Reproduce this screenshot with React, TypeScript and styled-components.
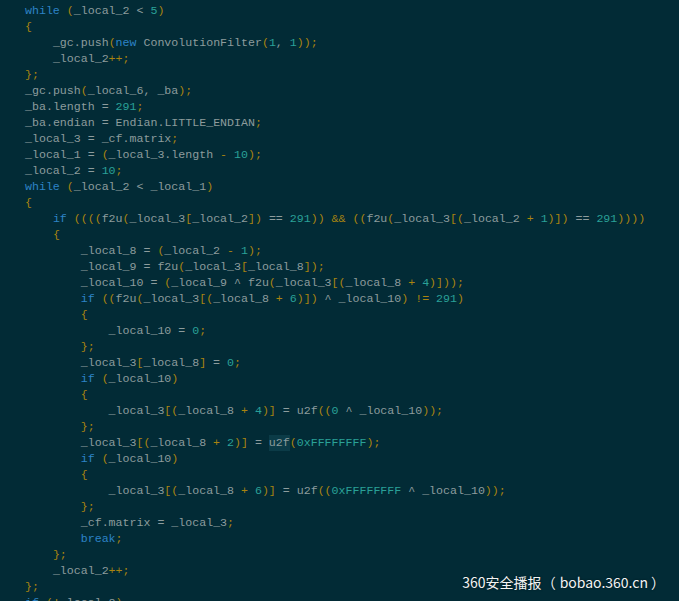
import React from "react";
import styled, { createGlobalStyle } from "styled-components";

const Global = createGlobalStyle`
  html, body { margin: 0; padding: 0; background: #022b36; overflow: hidden; }
  #root { width: 679px; height: 601px; }
`;

const Screen = styled.div`
  position: relative;
  width: 679px;
  height: 601px;
  overflow: hidden;
  background: #022b36;
`;

const Code = styled.pre`
  margin: -13px 0 0 0;
  padding: 0 0 0 25px;
  font-family: "Liberation Mono", "Courier New", monospace;
  font-size: 11.62px;
  line-height: 16px;
  color: #8d9c9d;
  white-space: pre;
`;

const Line = styled.div`
  height: 16px;
`;

type Kind = "kw" | "num" | "punc" | "op" | "txt" | "hl";

const colors: Record<Kind, string> = {
  kw: "#2d83c6",
  num: "#2aa198",
  punc: "#a98410",
  op: "#8d9c9d",
  txt: "#8d9c9d",
  hl: "#8d9c9d",
};

const Tok = styled.span<{ $k: Kind }>`
  color: ${(p) => colors[p.$k]};
  ${(p) => (p.$k === "hl" ? "background: #0b3b47; padding: 1px 0 2px 0;" : "")}
`;

const Watermark = styled.div`
  position: absolute;
  right: 14px;
  bottom: 9px;
  font-family: "Noto Sans CJK SC", "Noto Sans", sans-serif;
  font-size: 14px;
  color: #f2f4f4;
  text-shadow: 0 0 2px rgba(0, 0, 0, 0.6);
`;

const Paren = styled.span<{ $side: "open" | "close" }>`
  ${(p) => (p.$side === "open" ? "padding-right: 4px;" : "padding-left: 3px;")}
`;

const lines: string[] = [
  "_local_2 = 0;",
  "while (_local_2 < 5)",
  "{",
  "    _gc.push(new ConvolutionFilter(1, 1));",
  "    _local_2++;",
  "};",
  "_gc.push(_local_6, _ba);",
  "_ba.length = 291;",
  "_ba.endian = Endian.LITTLE_ENDIAN;",
  "_local_3 = _cf.matrix;",
  "_local_1 = (_local_3.length - 10);",
  "_local_2 = 10;",
  "while (_local_2 < _local_1)",
  "{",
  "    if ((((f2u(_local_3[_local_2]) == 291)) && ((f2u(_local_3[(_local_2 + 1)]) == 291))))",
  "    {",
  "        _local_8 = (_local_2 - 1);",
  "        _local_9 = f2u(_local_3[_local_8]);",
  "        _local_10 = (_local_9 ^ f2u(_local_3[(_local_8 + 4)]));",
  "        if ((f2u(_local_3[(_local_8 + 6)]) ^ _local_10) != 291)",
  "        {",
  "            _local_10 = 0;",
  "        };",
  "        _local_3[_local_8] = 0;",
  "        if (_local_10)",
  "        {",
  "            _local_3[(_local_8 + 4)] = u2f((0 ^ _local_10));",
  "        };",
  "        _local_3[(_local_8 + 2)] = @u2f(0xFFFFFFFF);",
  "        if (_local_10)",
  "        {",
  "            _local_3[(_local_8 + 6)] = u2f((0xFFFFFFFF ^ _local_10));",
  "        };",
  "        _cf.matrix = _local_3;",
  "        break;",
  "    };",
  "    _local_2++;",
  "};",
  "if (!_local_8)",
];

const KW = new Set(["while", "new", "if", "break"]);

function tokenize(src: string): { t: string; k: Kind }[] {
  const out: { t: string; k: Kind }[] = [];
  const re = /(@[A-Za-z_][A-Za-z0-9_]*)|(0x[0-9A-Fa-f]+|\b\d+\b)|([A-Za-z_][A-Za-z0-9_]*)|(\+\+|&&|!=|==|[-+!])|([()\[\]{};])|(\s+)|(.)/g;
  let m: RegExpExecArray | null;
  while ((m = re.exec(src))) {
    if (m[1]) out.push({ t: m[1].slice(1), k: "hl" });
    else if (m[2]) out.push({ t: m[2], k: "num" });
    else if (m[3]) out.push({ t: m[3], k: KW.has(m[3]) ? "kw" : "txt" });
    else if (m[4]) out.push({ t: m[4], k: m[4] === "==" ? "op" : "punc" });
    else if (m[5]) out.push({ t: m[5], k: "punc" });
    else out.push({ t: m[0], k: "txt" });
  }
  return out;
}

export default function App() {
  return (
    <Screen>
      <Global />
      <Code>
        {lines.map((l, i) => (
          <Line key={i}>
            {tokenize(l).map((tk, j) => (
              <Tok key={j} $k={tk.k}>
                {tk.t}
              </Tok>
            ))}
          </Line>
        ))}
      </Code>
      <Watermark>
        360安全播报<Paren $side="open">（</Paren>bobao.360.cn<Paren $side="close">）</Paren>
      </Watermark>
    </Screen>
  );
}
